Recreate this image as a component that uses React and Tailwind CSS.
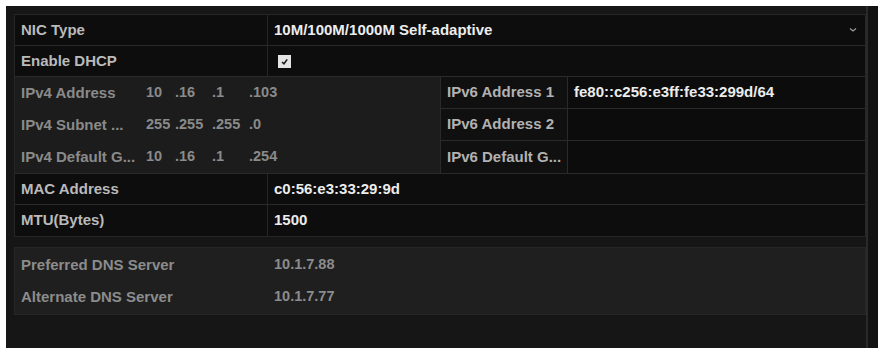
import React from 'react';

const font = { fontFamily: '"Liberation Sans", Arial, sans-serif' };

function IpValue({ parts }) {
    return (
        <div className="flex text-[14.5px] font-bold text-[#8a8a8a]">
            {parts.map((p, i) => (
                <span key={i} className={i === 0 ? 'w-[29px]' : 'w-[37px]'}>{p}</span>
            ))}
        </div>
    );
}

function Row({ label, children, last }) {
    return (
        <div className={`flex h-[31px] bg-[#0d0d0d] ${last ? '' : 'border-b border-[#2a2a2a]'}`}>
            <div className="w-[253px] shrink-0 flex items-center pl-[6px] text-[15px] font-bold text-[#bababa] border-r border-[#262626]">
                {label}
            </div>
            <div className="flex-1 flex items-center pl-[6px] text-[15px] font-bold text-[#ececec]">
                {children}
            </div>
        </div>
    );
}

function V6Row({ label, value, last }) {
    return (
        <div className={`flex h-[32px] ${last ? '' : 'border-b border-[#2a2a2a]'}`}>
            <div className="w-[127px] shrink-0 flex items-center pl-[6px] bg-[#101010] text-[15px] font-bold text-[#b2b2b2] border-r border-[#2a2a2a] whitespace-nowrap overflow-hidden">
                {label}
            </div>
            <div className="flex-1 flex items-center pl-[6px] bg-[#0c0c0c] text-[15px] font-bold text-[#ececec]">
                {value}
            </div>
        </div>
    );
}

export default function App() {
    const ipv4 = [
        { label: 'IPv4 Address', parts: ['10', '.16', '.1', '.103'] },
        { label: 'IPv4 Subnet ...', parts: ['255', '.255', '.255', '.0'] },
        { label: 'IPv4 Default G...', parts: ['10', '.16', '.1', '.254'] },
    ];

    return (
        <div className="bg-white w-[881px] h-[351px] pl-[6px] pt-[6px] pr-[3px] pb-[3px]" style={font}>
            <div className="h-full bg-[#161616] flex">
                <div className="flex-1 pl-[8px] pt-[8px]">
                    <div className="border border-[#262626]">
                        {/* NIC Type */}
                        <Row label="NIC Type">
                            <div className="flex-1 flex items-center justify-between pr-[8px]">
                                <span>10M/100M/1000M Self-adaptive</span>
                                <svg width="8" height="6" viewBox="0 0 8 6">
                                    <path d="M1 1.5 L4 4 L7 1.5" stroke="#9a9a9a" strokeWidth="1.3" fill="none" />
                                </svg>
                            </div>
                        </Row>

                        {/* Enable DHCP */}
                        <Row label="Enable DHCP">
                            <div className="ml-[4px] w-[13px] h-[13px] bg-[#e4e4e4] flex items-center justify-center">
                                <svg width="9" height="9" viewBox="0 0 9 9">
                                    <path d="M2 5 L4 6.8 L7.2 2.4" stroke="#1a1a1a" strokeWidth="1.6" fill="none" />
                                </svg>
                            </div>
                        </Row>

                        {/* IPv4 / IPv6 block */}
                        <div className="flex border-b border-[#2a2a2a]">
                            <div className="w-[426px] shrink-0 bg-[#1c1c1c] border-r border-[#2a2a2a]">
                                {ipv4.map((r) => (
                                    <div key={r.label} className="h-[32px] flex items-center">
                                        <div className="w-[131px] pl-[6px] text-[15px] font-bold text-[#8a8a8a] whitespace-nowrap">{r.label}</div>
                                        <IpValue parts={r.parts} />
                                    </div>
                                ))}
                            </div>
                            <div className="flex-1">
                                <V6Row label="IPv6 Address 1" value="fe80::c256:e3ff:fe33:299d/64" />
                                <V6Row label="IPv6 Address 2" value="" />
                                <V6Row label="IPv6 Default G..." value="" last />
                            </div>
                        </div>

                        <Row label="MAC Address">c0:56:e3:33:29:9d</Row>
                        <Row label="MTU(Bytes)" last>1500</Row>
                    </div>

                    {/* DNS */}
                    <div className="mt-[10px] bg-[#1f1f1f] border border-[#262626] py-[1px]">
                        <div className="h-[32px] flex items-center text-[15px] font-bold text-[#8c8c8c]">
                            <div className="w-[259px] pl-[6px]">Preferred DNS Server</div>
                            <div className="text-[14.5px]">10.1.7.88</div>
                        </div>
                        <div className="h-[32px] flex items-center text-[15px] font-bold text-[#8c8c8c]">
                            <div className="w-[259px] pl-[6px]">Alternate DNS Server</div>
                            <div className="text-[14.5px]">10.1.7.77</div>
                        </div>
                    </div>
                </div>

                {/* right strip */}
                <div className="w-[12px] shrink-0 flex">
                    <div className="w-[2px] bg-[#2a2a2a]" />
                    <div className="flex-1 bg-[#121212]" />
                </div>
            </div>
        </div>
    );
}
